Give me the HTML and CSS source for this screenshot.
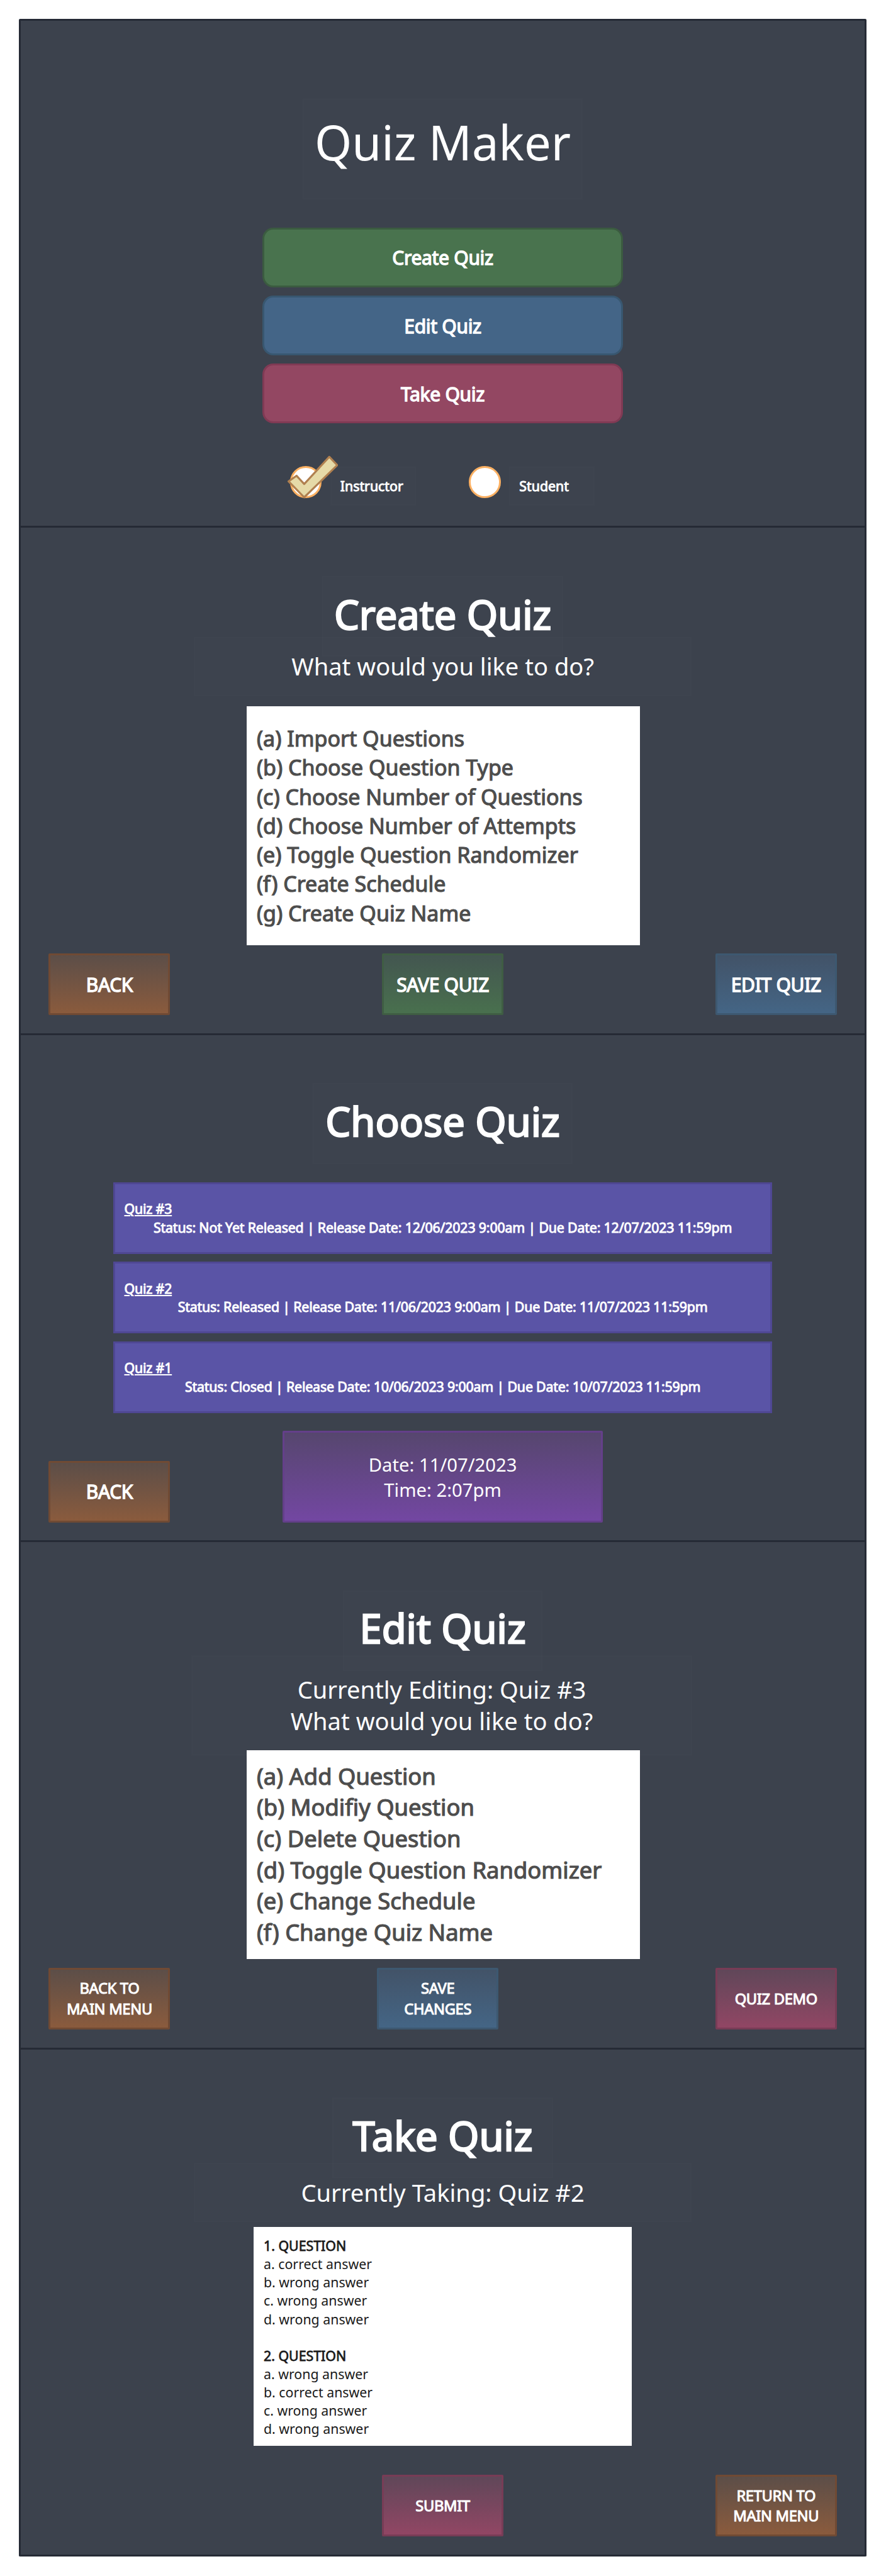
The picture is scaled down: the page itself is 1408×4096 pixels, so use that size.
FILE: index.html
```html
<!DOCTYPE html>
<html lang="en">
<head>
<meta charset="utf-8">
<title>Quiz Maker</title>
<link rel="stylesheet" href="styles.css">
</head>
<body>
<main class="frame">
  <section class="screen">
    <h1 class="title title-main">Quiz Maker</h1>
    <div class="menu">
      <button class="menu-button green">Create Quiz</button>
      <button class="menu-button blue">Edit Quiz</button>
      <button class="menu-button pink">Take Quiz</button>
    </div>
    <div class="roles">
      <div class="role">
        <span class="radio"><svg class="check" viewBox="575 915 104 88"><path d="M661.4 919.3 L677.4 936 L611 1000.7 L579.5 968.7 L595.5 957.3 L611 974 Z"/></svg></span>
        <span class="role-label">Instructor</span>
      </div>
      <div class="role">
        <span class="radio"></span>
        <span class="role-label">Student</span>
      </div>
    </div>
  </section>

  <section class="screen">
    <h2 class="title title-create">Create Quiz</h2>
    <p class="subtitle sub-create">What would you like to do?</p>
    <div class="panel panel-create">
      <div>(a) Import Questions</div>
      <div>(b) Choose Question Type</div>
      <div>(c) Choose Number of Questions</div>
      <div>(d) Choose Number of Attempts</div>
      <div>(e) Toggle Question Randomizer</div>
      <div>(f) Create Schedule</div>
      <div>(g) Create Quiz Name</div>
    </div>
    <div class="actions">
      <button class="action fade-orange">BACK</button>
      <button class="action fade-green">SAVE QUIZ</button>
      <button class="action fade-blue">EDIT QUIZ</button>
    </div>
  </section>

  <section class="screen">
    <h2 class="title title-choose">Choose Quiz</h2>
    <div class="quizzes">
      <article class="quiz"><a class="quiz-name">Quiz #3</a><p class="quiz-status">Status: Not Yet Released | Release Date: 12/06/2023 9:00am | Due Date: 12/07/2023 11:59pm</p></article>
      <article class="quiz"><a class="quiz-name">Quiz #2</a><p class="quiz-status">Status: Released | Release Date: 11/06/2023 9:00am | Due Date: 11/07/2023 11:59pm</p></article>
      <article class="quiz"><a class="quiz-name">Quiz #1</a><p class="quiz-status">Status: Closed | Release Date: 10/06/2023 9:00am | Due Date: 10/07/2023 11:59pm</p></article>
    </div>
    <div class="actions">
      <button class="action fade-orange">BACK</button>
      <div class="clock"><div>Date: 11/07/2023</div><div>Time: 2:07pm</div></div>
    </div>
  </section>

  <section class="screen">
    <h2 class="title title-edit">Edit Quiz</h2>
    <p class="subtitle sub-edit">Currently Editing: Quiz #3<br>What would you like to do?</p>
    <div class="panel panel-edit">
      <div>(a) Add Question</div>
      <div>(b) Modifiy Question</div>
      <div>(c) Delete Question</div>
      <div>(d) Toggle Question Randomizer</div>
      <div>(e) Change Schedule</div>
      <div>(f) Change Quiz Name</div>
    </div>
    <div class="actions">
      <button class="action small fade-orange">BACK TO<br>MAIN MENU</button>
      <button class="action small fade-blue save-changes">SAVE<br>CHANGES</button>
      <button class="action small fade-pink">QUIZ DEMO</button>
    </div>
  </section>

  <section class="screen">
    <h2 class="title title-take">Take Quiz</h2>
    <p class="subtitle sub-take">Currently Taking: Quiz #2</p>
    <div class="panel panel-take">
      <div class="question">
        <div class="question-name">1. QUESTION</div>
        <div>a. correct answer</div>
        <div>b. wrong answer</div>
        <div>c. wrong answer</div>
        <div>d. wrong answer</div>
      </div>
      <div class="question">
        <div class="question-name">2. QUESTION</div>
        <div>a. wrong answer</div>
        <div>b. correct answer</div>
        <div>c. wrong answer</div>
        <div>d. wrong answer</div>
      </div>
    </div>
    <div class="actions">
      <button class="action small fade-pink submit">SUBMIT</button>
      <button class="action small fade-orange return">RETURN TO<br>MAIN MENU</button>
    </div>
  </section>
</main>
</body>
</html>
```
FILE: styles.css
```css
* {
  box-sizing: border-box;
}

html {
  background: #fff;
  font-size: 7.9057px;
}

body {
  margin: 0;
  padding: 3.8rem 0 3.6rem 3.8rem;
  font-family: "Noto Sans", sans-serif;
  color: #fff;
}

h1, h2, p {
  margin: 0;
  font-weight: 400;
}

button {
  padding: 0;
  font-family: inherit;
  color: inherit;
  line-height: inherit;
}

.frame {
  width: 170.4rem;
  border: solid #252a35;
  border-width: 0 3px 3px;
  border-radius: 2px;
  overflow: hidden;
}

.screen {
  display: flex;
  flex-direction: column;
  align-items: center;
  height: 102rem;
  border-top: 3px solid #252a35;
  background: #3c424d;
}

/* headings */
.title {
  display: flex;
  align-items: center;
  justify-content: center;
  height: 16.2rem;
  margin-top: 9.7rem;
  padding-bottom: 1rem;
  flex: none;
  font-size: 8rem;
  white-space: nowrap;
  -webkit-text-stroke: 0.3rem #fff;
  background: rgba(160, 165, 175, 0.02);
  border: 2px solid rgba(160, 150, 165, 0.012);
}

.title-main {
  width: 56.2rem;
  height: 20.2rem;
  margin-top: 15.7rem;
  padding-bottom: 2.8rem;
  font-size: 9.6rem;
  -webkit-text-stroke: 0;
}

.title-create { width: 48.4rem; }
.title-choose { width: 52.2rem; }
.title-edit { width: 40.2rem; }
.title-take { width: 44.4rem; }

.subtitle {
  display: flex;
  align-items: center;
  justify-content: center;
  flex: none;
  width: 100rem;
  height: 11.9rem;
  font-size: 4.82rem;
  line-height: 6.4rem;
  text-align: center;
  background: rgba(160, 165, 175, 0.02);
  border: 2px solid rgba(160, 150, 165, 0.012);
}

.sub-create { margin-top: -4rem; }
.sub-take { margin-top: -3.1rem; }

.sub-edit {
  width: 100.8rem;
  height: 20rem;
  margin: -3.1rem 0.4rem 0 0;
}

/* main menu */
.menu {
  display: flex;
  flex-direction: column;
  gap: 1.7rem;
  margin-top: 5.7rem;
}

.menu-button {
  width: 72.4rem;
  height: 12rem;
  padding-top: 1px;
  border: 3px solid;
  border-radius: 2.2rem;
  font-size: 3.8rem;
  letter-spacing: -0.04rem;
  -webkit-text-stroke: 0.17rem #fff;
}

.green { background: #49734e; border-color: #3b5b40; }
.blue { background: #446587; border-color: #385770; }
.pink { background: #934762; border-color: #803a54; }

.roles {
  display: flex;
  gap: 10.7rem;
  margin: 8.6rem 0 0 -0.2rem;
}

.role {
  display: flex;
  gap: 1.7rem;
}

.radio {
  position: relative;
  width: 6.4rem;
  height: 6.4rem;
  border: 3px solid #fbb062;
  border-radius: 50%;
  background: #fff;
}

.check {
  position: absolute;
  left: -1.1rem;
  top: -2.7rem;
  width: 10.4rem;
  height: 8.8rem;
  fill: #e6daa8;
  stroke: #b08050;
  stroke-width: 4;
  stroke-linejoin: round;
}

.role-label {
  display: flex;
  align-items: center;
  width: 17.2rem;
  height: 7.8rem;
  margin-top: 0.1rem;
  padding-left: 1.8rem;
  font-size: 2.7rem;
  -webkit-text-stroke: 0.12rem #fff;
  background: rgba(160, 165, 175, 0.02);
  border: 2px solid rgba(160, 150, 165, 0.02);
}

/* white panels */
.panel {
  display: flex;
  flex-direction: column;
  justify-content: center;
  flex: none;
  width: 79rem;
  margin-left: 0.2rem;
  padding-left: 2rem;
  background: #fff;
  color: #4d4d4d;
  -webkit-text-stroke: 0.15rem #4d4d4d;
}

.panel-create {
  height: 48rem;
  margin-top: 2.1rem;
  font-size: 4.3rem;
  line-height: 5.85rem;
}

.panel-edit {
  height: 42rem;
  margin-top: -1rem;
  font-size: 4.6rem;
  line-height: 6.28rem;
}

.panel-take {
  gap: 3.7rem;
  width: 76rem;
  height: 44rem;
  margin: 1rem 0 0;
  padding-top: 0.4rem;
  color: #1a1a1a;
  font-size: 2.7rem;
  line-height: 3.68rem;
  -webkit-text-stroke: 0;
}

.question-name { -webkit-text-stroke: 0.1rem #1a1a1a; }

/* bottom buttons */
.actions {
  display: grid;
  grid-template-columns: 24.4rem 1fr 24.4rem;
  justify-items: center;
  align-items: end;
  width: 158.4rem;
  margin-top: auto;
  margin-bottom: 3.6rem;
}

.action {
  width: 24.4rem;
  height: 12.4rem;
  border: 3px solid;
  border-radius: 2px;
  font-size: 3.8rem;
  letter-spacing: -0.04rem;
  -webkit-text-stroke: 0.17rem #fff;
}

.small {
  font-size: 3rem;
  line-height: 4.12rem;
  -webkit-text-stroke-width: 0.13rem;
}

.fade-orange { background: linear-gradient(#5c4e48, #8a5b3d); border-color: #704a34; }
.fade-green { background: linear-gradient(#435650, #49704e); border-color: #3f5d43; }
.fade-blue { background: linear-gradient(#425368, #446585); border-color: #3d5870; }
.fade-pink { background: linear-gradient(#604759, #914664); border-color: #783c56; }

.save-changes { margin-right: 2rem; }
.submit { grid-column: 2; }
.return { grid-column: 3; }

/* quiz list */
.quizzes {
  display: flex;
  flex-direction: column;
  gap: 1.6rem;
  width: 132.4rem;
  margin-top: 3.7rem;
}

.quiz {
  display: flex;
  flex-direction: column;
  justify-content: center;
  height: 14.4rem;
  padding: 0 1.8rem;
  border: 3px solid #4f4793;
  background: #5a54a6;
  font-size: 2.7rem;
  line-height: 3.7rem;
  letter-spacing: -0.021rem;
  -webkit-text-stroke: 0.12rem #fff;
}

.quiz-name {
  align-self: flex-start;
  text-decoration: underline;
}

.quiz-status { text-align: center; }

.clock {
  display: flex;
  flex-direction: column;
  align-items: center;
  justify-content: center;
  width: 64.4rem;
  height: 18.4rem;
  padding-top: 0.2rem;
  border: 3px solid #643f8a;
  border-radius: 2px;
  background: linear-gradient(#56466e, #7347a2);
  font-size: 3.7rem;
  line-height: 5.08rem;
}
```
